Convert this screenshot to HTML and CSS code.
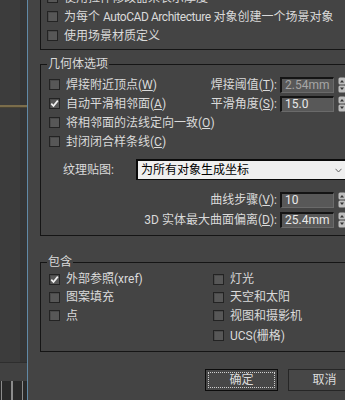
FILE: index.html
```html
<!DOCTYPE html>
<html lang="zh-CN">
<head>
  <meta charset="UTF-8" />
  <title>AutoCAD DWG 导入选项</title>
  <link rel="stylesheet" href="styles.css">
</head>
<body>
  <div class="app">
    <!-- 左侧视口边缘 -->
    <div class="viewport">
      <div class="vp-top"><div class="vp-line"></div></div>
      <div class="vp-panel"></div>
      <div class="vp-ruler"></div>
    </div>

    <div class="dialog">
      <fieldset class="group group-scene">
        <div class="row"><span class="check"><span class="box"></span>使用拉伸修改器来表示厚度</span></div>
        <div class="row"><span class="check"><span class="box"></span>为每个 <span class="latin">AutoCAD Architecture</span> 对象创建一个场景对象</span></div>
        <div class="row"><span class="check"><span class="box"></span>使用场景材质定义</span></div>
      </fieldset>

      <fieldset class="group group-geo">
        <legend>几何体选项</legend>
        <div class="row">
          <span class="check"><span class="box"></span>焊接附近顶点(<span class="key">W</span>)</span>
          <span class="field">
            <span class="label">焊接阈值(<span class="key">T</span>):</span>
            <span class="num off">2.54mm</span>
            <svg class="spin" viewBox="0 0 8 16"><rect x="0.5" y="0.5" width="7" height="7" rx="1.5" fill="#bdbdbd"/><path d="M2 5.5 L4 3 L6 5.5Z" fill="#333"/><rect x="0.5" y="8.5" width="7" height="7" rx="1.5" fill="#bdbdbd"/><path d="M2 10.5 L4 13 L6 10.5Z" fill="#333"/></svg>
          </span>
        </div>
        <div class="row">
          <span class="check"><span class="box"><svg viewBox="0 0 9 9"><path d="M1.3 4.6 L3.5 7 L7.8 1.6" fill="none" stroke="#f2f2f2" stroke-width="1.7"/></svg></span>自动平滑相邻面(<span class="key">A</span>)</span>
          <span class="field">
            <span class="label">平滑角度(<span class="key">S</span>):</span>
            <span class="num">15.0</span>
            <svg class="spin" viewBox="0 0 8 16"><rect x="0.5" y="0.5" width="7" height="7" rx="1.5" fill="#bdbdbd"/><path d="M2 5.5 L4 3 L6 5.5Z" fill="#333"/><rect x="0.5" y="8.5" width="7" height="7" rx="1.5" fill="#bdbdbd"/><path d="M2 10.5 L4 13 L6 10.5Z" fill="#333"/></svg>
          </span>
        </div>
        <div class="row"><span class="check"><span class="box"></span>将相邻面的法线定向一致(<span class="key">O</span>)</span></div>
        <div class="row"><span class="check"><span class="box"></span>封闭闭合样条线(<span class="key">C</span>)</span></div>

        <div class="map-row">
          <span class="map-label">纹理贴图:</span>
          <span class="select">为所有对象生成坐标
            <svg class="chevron" viewBox="0 0 7 5"><path d="M0.5 0.8 L3.5 4 L6.5 0.8" fill="none" stroke="#666" stroke-width="1"/></svg>
          </span>
        </div>

        <div class="param-row first">
          <span class="label">曲线步骤(<span class="key">V</span>):</span>
          <span class="num">10</span>
          <svg class="spin" viewBox="0 0 8 16"><rect x="0.5" y="0.5" width="7" height="7" rx="1.5" fill="#bdbdbd"/><path d="M2 5.5 L4 3 L6 5.5Z" fill="#333"/><rect x="0.5" y="8.5" width="7" height="7" rx="1.5" fill="#bdbdbd"/><path d="M2 10.5 L4 13 L6 10.5Z" fill="#333"/></svg>
        </div>
        <div class="param-row">
          <span class="label">3D 实体最大曲面偏离(<span class="key">D</span>):</span>
          <span class="num">25.4mm</span>
          <svg class="spin" viewBox="0 0 8 16"><rect x="0.5" y="0.5" width="7" height="7" rx="1.5" fill="#bdbdbd"/><path d="M2 5.5 L4 3 L6 5.5Z" fill="#333"/><rect x="0.5" y="8.5" width="7" height="7" rx="1.5" fill="#bdbdbd"/><path d="M2 10.5 L4 13 L6 10.5Z" fill="#333"/></svg>
        </div>
      </fieldset>

      <fieldset class="group group-inc">
        <legend>包含</legend>
        <div class="inc-grid">
          <span class="check"><span class="box"><svg viewBox="0 0 9 9"><path d="M1.3 4.6 L3.5 7 L7.8 1.6" fill="none" stroke="#f2f2f2" stroke-width="1.7"/></svg></span>外部参照(xref)</span>
          <span class="check"><span class="box"></span>图案填充</span>
          <span class="check"><span class="box"></span>点</span>
          <span></span>
          <span class="check"><span class="box"></span>灯光</span>
          <span class="check"><span class="box"></span>天空和太阳</span>
          <span class="check"><span class="box"></span>视图和摄影机</span>
          <span class="check"><span class="box"></span>UCS(栅格)</span>
        </div>
      </fieldset>

      <div class="actions">
        <button class="btn btn-ok">确定</button>
        <button class="btn">取消</button>
      </div>
    </div>
  </div>
</body>
</html>
```

FILE: styles.css
```css
* {
  box-sizing: border-box;
}

body {
  margin: 0;
  background: #444444;
  color: #dadada;
  font-family: Roboto, "Noto Sans CJK SC", sans-serif;
  font-size: 12px;
  line-height: 16px;
  text-autospace: no-autospace;
  overflow: hidden;
}

.app {
  display: flex;
  height: 400px;
}

/* viewport strip */
.viewport {
  width: 28px;
  flex: none;
  display: flex;
  flex-direction: column;
  border-right: 1px solid #6189a6;
  background: linear-gradient(to right, #3c3c3c 0 20px, #353535 20px);
}

.vp-top {
  height: 362px;
  padding-top: 105px;
}

.vp-line {
  height: 3px;
  background: #7b6d4b;
  border-bottom: 1px solid #4a4434;
}

.vp-panel {
  height: 19px;
  border-top: 1px solid #2e2e2e;
  background: #414141;
}

.vp-ruler {
  flex: 1;
  background: #2a2a2a repeating-linear-gradient(to right, #8c8c8c 0 1px, transparent 1px 10.5px);
  background-position: 1px 0;
}

/* dialog */
.dialog {
  flex: 1;
  min-width: 0;
  padding-left: 12px;
  overflow: hidden;
  display: flex;
  flex-direction: column;
}

.group {
  margin: 0;
  width: 316px;
  flex: none;
  border: 1px solid #151515;
  padding: 0 9px 5px 8px;
}

.group legend {
  padding: 0 1px;
  margin-left: -2px;
  line-height: 16px;
}

.group-scene {
  margin-top: -13px;
  padding-bottom: 4px;
  padding-left: 6px;
}

.group-geo {
  margin-top: 6px;
  padding-top: 3px;
}

.group-inc {
  margin-top: 18px;
}

.row {
  display: flex;
  align-items: center;
  height: 19px;
}

.check {
  display: flex;
  align-items: center;
  white-space: nowrap;
}

.latin {
  margin: 0 3px;
  letter-spacing: -0.45px;
}

.box {
  width: 11px;
  height: 11px;
  flex: none;
  margin-right: 6px;
  display: flex;
  align-items: center;
  justify-content: center;
  border: 1px solid #232323;
  background: #575757;
  box-shadow: inset 1px 1px 0 #4a4a4a;
}

.box svg {
  width: 9px;
  height: 9px;
}

.key {
  text-decoration: underline;
}

.field {
  margin-left: auto;
  display: flex;
  align-items: center;
}

.label {
  margin-right: 3px;
  white-space: nowrap;
}

.num {
  width: 54px;
  height: 16px;
  flex: none;
  padding-left: 3px;
  line-height: 13px;
  background: #585858;
  color: #e8e8e8;
  border: 1px solid;
  border-width: 2px 1px 1px 2px;
  border-color: #141414 #6a6a6a #6a6a6a #141414;
}

.num.off {
  color: #a6a6a6;
}

.spin {
  width: 8px;
  height: 16px;
  margin-left: 4px;
  flex: none;
}

.map-row {
  display: flex;
  align-items: center;
  height: 21px;
  margin-top: 8px;
  padding-left: 14px;
}

.map-label {
  width: 73px;
  flex: none;
}

.select {
  flex: 1;
  height: 21px;
  display: flex;
  align-items: center;
  justify-content: space-between;
  padding: 0 3px 0 3px;
  background: #efefef;
  color: #000;
  border: 1px solid #0a0a0a;
  border-width: 2px 1px 1px 2px;
}

.chevron {
  width: 7px;
  height: 5px;
}

.param-row {
  height: 20px;
  display: flex;
  align-items: center;
  justify-content: flex-end;
}

.param-row.first {
  margin-top: 10px;
}

.inc-grid {
  display: grid;
  grid-template-columns: 164px auto;
  grid-template-rows: 18px 18px 19px 21px;
  grid-auto-flow: column;
  align-items: center;
}

.actions {
  display: flex;
  gap: 10px;
  margin-top: 17px;
  padding-left: 165px;
}

.btn {
  width: 73px;
  height: 22px;
  flex: none;
  padding: 0;
  font: inherit;
  color: #dcdcdc;
  background: #474747;
  border: 1px solid #262626;
}

.btn-ok {
  border-color: #0c0c0c;
  outline: 1px dotted #cfcfcf;
  outline-offset: -4px;
}
```
